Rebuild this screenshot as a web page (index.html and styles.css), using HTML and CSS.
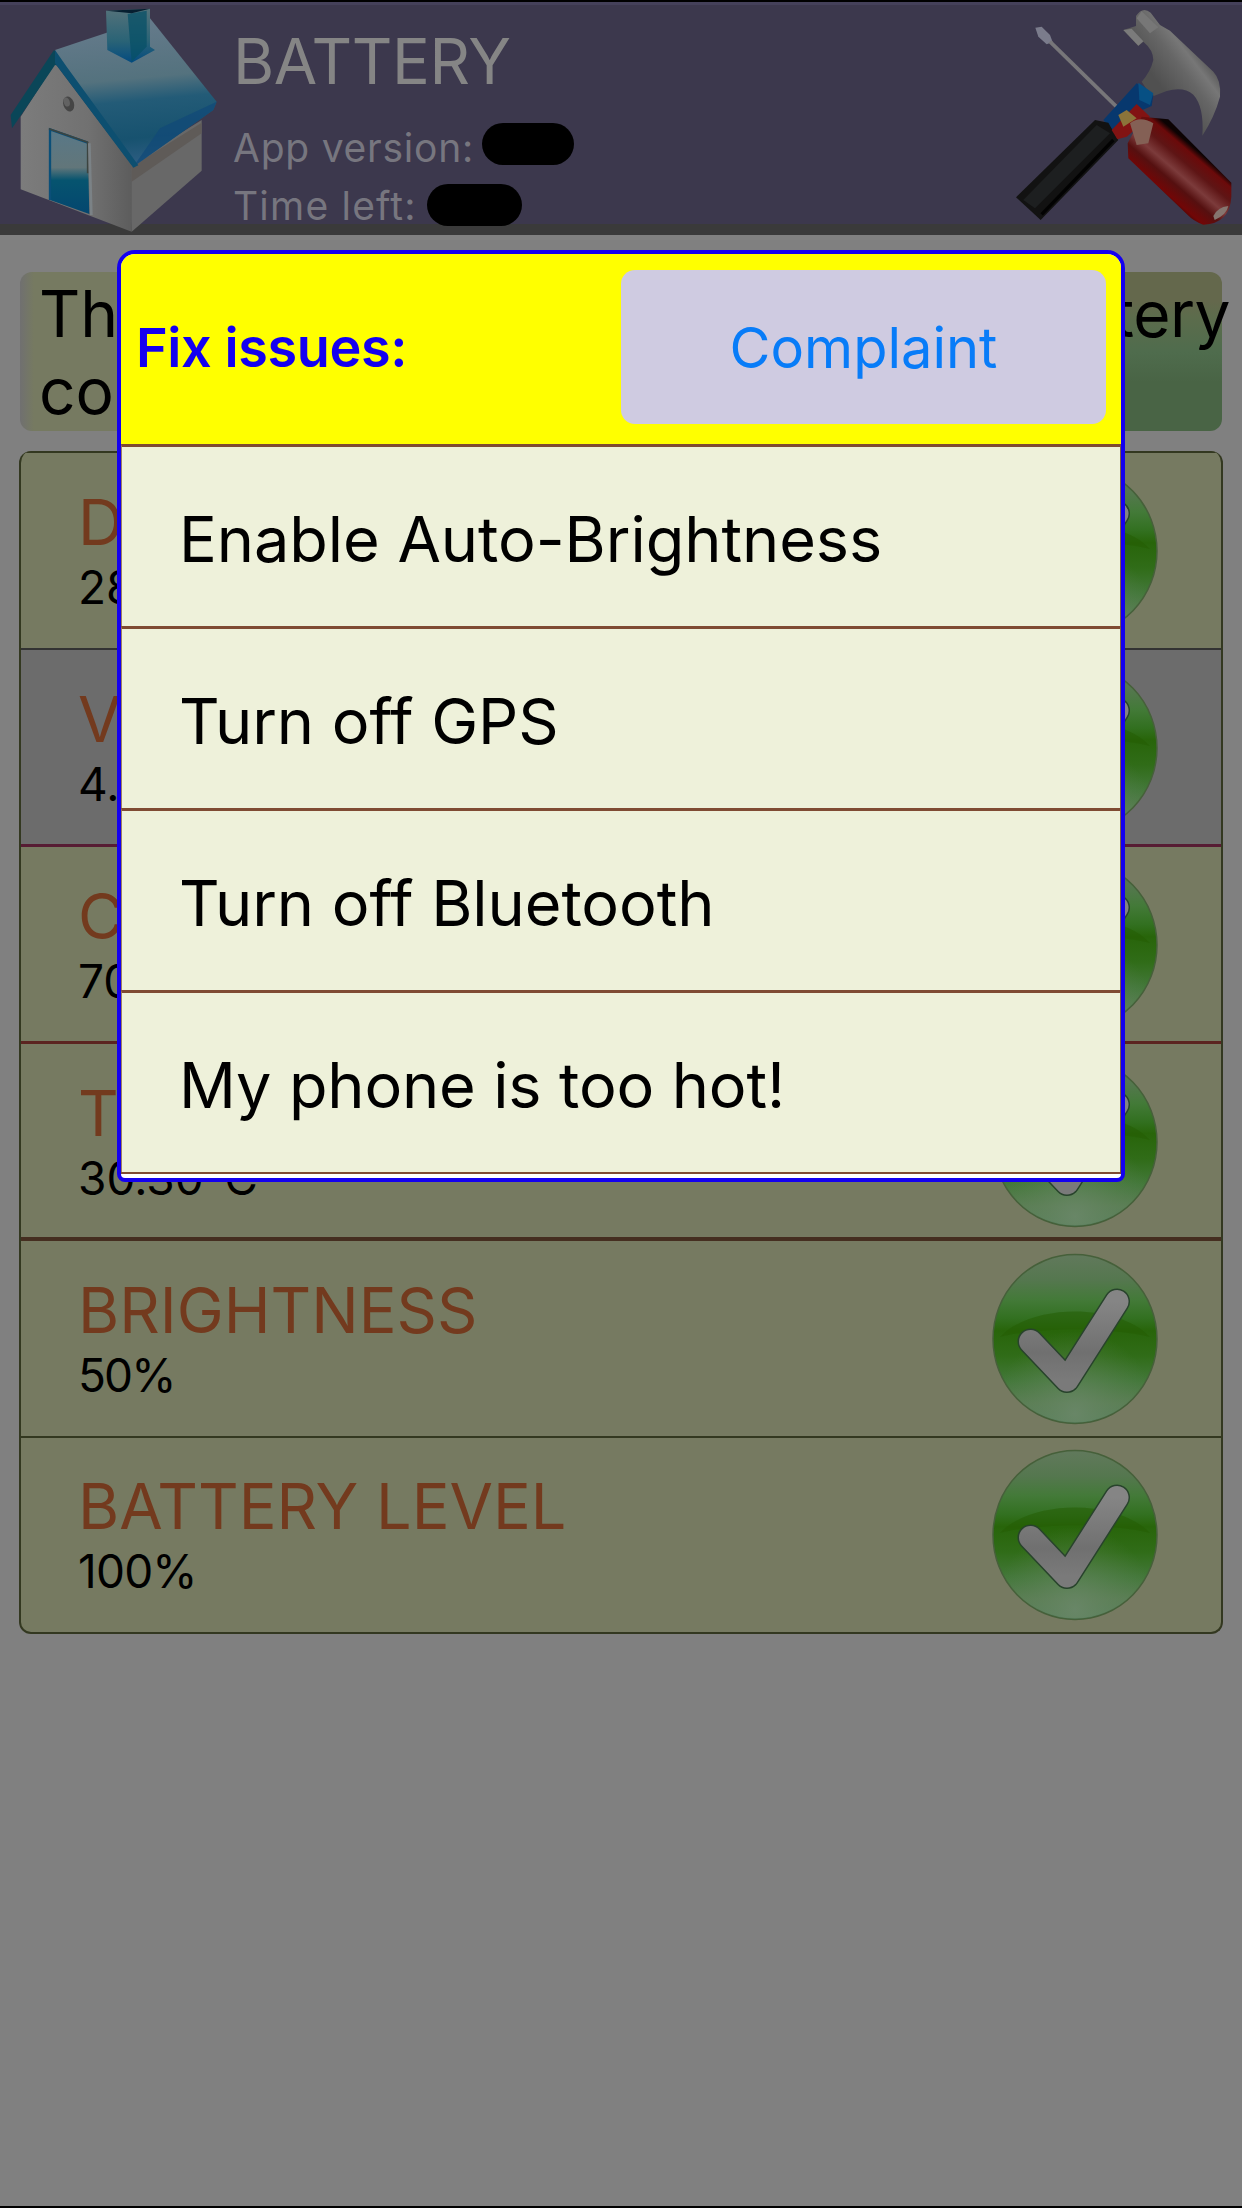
FILE: index.html
```html
<!DOCTYPE html>
<html lang="en">
<head>
<meta charset="utf-8">
<title>Battery</title>
<link rel="stylesheet" href="styles.css">
</head>
<body>
<svg width="0" height="0" class="defs">
  <defs>
    <linearGradient id="ball" x1="0" y1="0" x2="0" y2="1">
      <stop offset="0" stop-color="#61795c"/><stop offset=".15" stop-color="#55774f"/>
      <stop offset=".27" stop-color="#437a38"/><stop offset=".38" stop-color="#327020"/>
      <stop offset=".45" stop-color="#28650a"/><stop offset=".6" stop-color="#306c18"/>
      <stop offset=".75" stop-color="#43783a"/><stop offset=".88" stop-color="#5a7d55"/>
      <stop offset="1" stop-color="#588060"/>
    </linearGradient>
    <radialGradient id="glow" cx=".5" cy=".95" r=".5">
      <stop offset="0" stop-color="#6a8768" stop-opacity=".9"/><stop offset="1" stop-color="#5a8050" stop-opacity="0"/>
    </radialGradient>
    <linearGradient id="tick" x1="0" y1="0" x2="0" y2="1">
      <stop offset="0" stop-color="#858585"/><stop offset=".65" stop-color="#707070"/><stop offset="1" stop-color="#7a7a7a"/>
    </linearGradient>
    <symbol id="ok" viewBox="0 0 168 172">
      <ellipse cx="83" cy="86" rx="82" ry="84.500" fill="url(#ball)" stroke="#46603a" stroke-width="1.500"/>
      <path d="M8 84C40 50 126 50 158 84C120 74 46 74 8 84Z" fill="#245c04" opacity=".55"/>
      <ellipse cx="83" cy="86" rx="81" ry="83" fill="url(#glow)"/>
      <path d="M38.500 88.500L75 127L125 48.500" fill="none" stroke="#28432c" stroke-width="26" stroke-linecap="round" stroke-linejoin="round"/>
      <path d="M38.500 88.500L75 127L125 48.500" fill="none" stroke="url(#tick)" stroke-width="23" stroke-linecap="round" stroke-linejoin="round"/>
    </symbol>
  </defs>
</svg>

<div class="screen">
  <header class="topbar">
    <svg class="house" viewBox="0 0 690 705">
      <defs>
        <linearGradient id="roof" x1=".5" y1="0" x2=".6" y2="1">
          <stop offset="0" stop-color="#667b8c"/><stop offset=".4" stop-color="#54727e"/>
          <stop offset=".55" stop-color="#235b77"/><stop offset=".8" stop-color="#17526f"/><stop offset="1" stop-color="#315f85"/>
        </linearGradient>
        <linearGradient id="door" x1="0" y1="0" x2="0" y2="1">
          <stop offset="0" stop-color="#587888"/><stop offset=".45" stop-color="#62767a"/>
          <stop offset=".6" stop-color="#06546f"/><stop offset="1" stop-color="#04466f"/>
        </linearGradient>
        <linearGradient id="wall" x1="0" y1="0" x2="1" y2="0">
          <stop offset="0" stop-color="#7c7c7c"/><stop offset=".6" stop-color="#717171"/><stop offset="1" stop-color="#5c5c5c"/>
        </linearGradient>
        <linearGradient id="chim" x1="0" y1="0" x2="0" y2="1">
          <stop offset="0" stop-color="#54727a"/><stop offset=".6" stop-color="#2a6376"/><stop offset="1" stop-color="#034b80"/>
        </linearGradient>
      </defs>
      <path d="M165 190L62 350V568L395 695L400 500Z" fill="url(#wall)"/>
      <path d="M395 490L605 360V512L395 695Z" fill="#686868"/>
      <path d="M395 500L605 368V400L395 545Z" fill="#5f5b58"/>
      <path d="M162 150L32 345L36 385L60 350L165 195L195 200Z" fill="#0a4658"/>
      <path d="M165 150L320 98L450 55L650 305L640 330L400 500L182 205Z" fill="url(#roof)"/>
      <path d="M650 305L640 330L400 500L480 385Z" fill="#124978" opacity=".75"/>
      <path d="M165 150L200 200L415 496L400 503L165 190Z" fill="#0d4f70"/>
      <path d="M318 32L450 26V140L465 150L395 188L322 150Z" fill="url(#chim)"/>
      <path d="M383 42L440 32V140L395 185Z" fill="#075067" opacity=".75"/>
      <path d="M320 32L450 26L395 40Z" fill="#061f30"/>
      <ellipse cx="206" cy="312" rx="16" ry="23" fill="#454545" transform="rotate(-18 206 312)"/>
      <ellipse cx="200" cy="306" rx="9" ry="14" fill="#626262" transform="rotate(-18 200 306)"/>
      <path d="M147 388L263 428L268 642L150 600Z" fill="url(#door)"/>
      <path d="M150 600V388L263 428" fill="none" stroke="#0b4f78" stroke-width="7"/>
      <path d="M147 386L263 427V520" fill="none" stroke="#3c4440" stroke-width="5"/>
      <path d="M268 430L274 645" stroke="#7b8286" stroke-width="8"/>
    </svg>
    <div class="heading">
      <h1>BATTERY</h1>
      <div class="meta version"><span>App version:</span><i class="pill first"></i></div>
      <div class="meta left"><span>Time left:</span><i class="pill second"></i></div>
    </div>
    <svg class="tools" viewBox="0 0 786 705">
      <defs>
        <linearGradient id="red" gradientUnits="userSpaceOnUse" x1="530" y1="590" x2="650" y2="450">
          <stop offset="0" stop-color="#280606"/><stop offset=".15" stop-color="#720606"/><stop offset=".35" stop-color="#551010"/>
          <stop offset=".52" stop-color="#7c3b3b"/><stop offset=".72" stop-color="#5e1515"/><stop offset=".9" stop-color="#6b0a0a"/><stop offset="1" stop-color="#0c0303"/>
        </linearGradient>
        <linearGradient id="steel" gradientUnits="userSpaceOnUse" x1="520" y1="230" x2="650" y2="130">
          <stop offset="0" stop-color="#505050"/><stop offset=".5" stop-color="#666"/><stop offset=".75" stop-color="#777"/><stop offset="1" stop-color="#555"/>
        </linearGradient>
      </defs>
      <path d="M430 90L468 78V48Q488 18 512 38L540 75L570 92L700 215Q724 240 720 290Q704 350 667 407Q673 320 640 284Q610 258 560 273L515 290L485 245Q512 215 520 180Q520 150 490 125L475 138Z" fill="url(#steel)"/>
      <path d="M430 90L475 137L490 124L455 86Z" fill="#7b7b7b"/>
      <path d="M470 55L485 34L535 82L510 100Z" fill="#777"/>
      <path d="M166 83L185 80L210 105L218 126L200 133L175 110Z" fill="#7b7c8c"/>
      <path d="M210 125L440 350" stroke="#777679" stroke-width="11"/>
      <path d="M470 250L520 285L515 318L440 350L408 408L370 360Z" fill="#07386e"/>
      <path d="M475 248L520 280L510 315L478 300Z" fill="#075084"/>
      <path d="M345 360L385 368L415 420L182 660L108 592Z" fill="#121212"/>
      <path d="M350 375L390 400L165 625L130 600Z" fill="#1d1f20"/>
      <path d="M400 420L185 643" stroke="#020202" stroke-width="10"/>
      <path d="M470 312L510 350L440 410L412 418L395 390Z" fill="#821313"/>
      <path d="M415 345L440 330L470 355L430 380Z" fill="#8b743a"/>
      <path d="M485 350L565 358L754 548V590Q750 670 670 674Q642 665 620 642L445 475L443 430Z" fill="url(#red)"/>
      <path d="M450 370Q480 345 520 370L505 430L470 435Z" fill="#846055"/>
      <path d="M700 648Q712 622 745 618Q740 644 704 660Z" fill="#85756f"/>
    </svg>
  </header>

  <main class="content">
    <section class="tip">
      <div class="tip-line"><span>Th</span><span class="tail">tery</span></div>
      <div class="tip-line"><span>co</span></div>
    </section>
    <ul class="stats">
      <li class="stat"><div><h2>D</h2><p>28</p></div><svg class="ok"><use href="#ok"/></svg></li>
      <li class="stat grey"><div><h2>V</h2><p>4.</p></div><svg class="ok"><use href="#ok"/></svg></li>
      <li class="stat wine plum"><div><h2>C</h2><p>70</p></div><svg class="ok"><use href="#ok"/></svg></li>
      <li class="stat wine"><div><h2>T</h2><p>30.30°C</p></div><svg class="ok"><use href="#ok"/></svg></li>
      <li class="stat brown"><div><h2>BRIGHTNESS</h2><p class="half">50%</p></div><svg class="ok"><use href="#ok"/></svg></li>
      <li class="stat"><div><h2>BATTERY LEVEL</h2><p class="full">100%</p></div><svg class="ok"><use href="#ok"/></svg></li>
    </ul>
  </main>

  <div class="dialog" role="dialog">
    <div class="dialog-head">
      <strong>Fix issues:</strong>
      <button class="complaint" type="button">Complaint</button>
    </div>
    <ul class="issues">
      <li>Enable Auto-Brightness</li>
      <li>Turn off GPS</li>
      <li>Turn off Bluetooth</li>
      <li class="hot">My phone is too hot!</li>
    </ul>
  </div>
</div>
</body>
</html>
```
FILE: styles.css
```css
* { box-sizing: border-box; margin: 0; padding: 0; }
body { background: #808080; font-family: Inter, "Liberation Sans", sans-serif; color: #000; }
ul { list-style: none; }
.defs { position: absolute; }
.screen { position: relative; width: 1242px; height: 2208px; overflow: hidden; border-bottom: 2px solid #000; }

.topbar { display: flex; height: 235px; background: linear-gradient(#000 0 2px, #45415a 2px 5px, #3c384d 5px 224px, #3a3a3a 224px); color: #828189; }
.house { width: 230px; height: 235px; flex: none; }
.tools { width: 262px; height: 235px; flex: none; }
.heading { flex: 1; padding: 23px 0 0 3px; white-space: nowrap; }
.heading h1 { font-size: 63px; line-height: 76px; font-weight: 400; letter-spacing: -.4px; color: #858585; }
.meta { display: flex; align-items: center; font-size: 39px; line-height: 58px; height: 58px; color: #77767f; }
.version { margin-top: 20px; letter-spacing: .75px; }
.left { letter-spacing: 1.2px; }
.pill { height: 42px; border-radius: 21px; background: #000; }
.first { width: 92px; margin-left: 8px; margin-top: -9px; }
.second { width: 95px; margin-left: 10px; margin-top: -3px; }

.content { padding: 37px 19px 0; }
.tip { height: 159px; margin: 0 1px; border-radius: 12px; padding: 3px 0 0 19px; font-size: 64px; line-height: 77px;
  background: linear-gradient(90deg, #707070 0, #767a61 14px, #767a61 60%, transparent 92%), linear-gradient(#64684c 0 30px, #5c6c4c 45px, #4f6c4d 80px, #496445 110px); }
.tip-line { display: flex; justify-content: space-between; }
.tail { margin-right: -8px; letter-spacing: -.5px; }
.stats { margin-top: 20px; border: 2px solid #333820; border-top: 0; border-radius: 12px; background: #767a61; overflow: hidden; }
.stat { height: 197px; display: flex; justify-content: space-between; align-items: center; padding: 0 61px 0 57px; border-top: 2px solid #333820; }
.stat:last-child { height: 196px; }
.stat h2 { font-size: 63px; line-height: 72px; font-weight: 400; color: #733a1e; letter-spacing: 0; }
.stat p { font-size: 46px; line-height: 58px; }
.stat .half { letter-spacing: -1.9px; }
.stat .full { letter-spacing: -.8px; }
.stat.grey { background: #6c6c6c; border-color: #333; }
.stat.wine { height: 198px; margin-top: -1px; border-top: 3px solid #5b2420; }
.stat.plum { border-top-color: #571c34; background: #767a61; }
.stat.brown { height: 199px; margin-top: -2px; border-top: 4px solid #452e20; }
.ok { width: 168px; height: 172px; flex: none; }

.dialog { position: absolute; left: 117px; top: 250px; width: 1008px; height: 932px; background: #fff; border: 4px solid #1400f0; border-radius: 18px 18px 8px 8px; overflow: hidden; }
.dialog-head { display: flex; justify-content: space-between; align-items: center; height: 190px; padding: 0 15px 4px 15px; background: #ff0; }
.dialog-head strong { font-size: 54px; font-weight: 600; color: #1400f0; letter-spacing: -.4px; }
.complaint { width: 485px; height: 154px; padding-top: 2px; border: 0; border-radius: 14px; background: #cfcbe1; color: #087cf8; font: 400 56px Inter, "Liberation Sans", sans-serif; }
.issues { border-bottom: 2px solid #7f4b33; }
.issues li { height: 182px; display: flex; align-items: center; padding: 4px 0 0 57px; border-top: 3px solid #7f4b33; border-left: 1px solid #a08060; border-right: 1px solid #806040; background: #eef1da; font-size: 63px; letter-spacing: -.05px; white-space: nowrap; }
.issues .hot { letter-spacing: -.15px; }
```
